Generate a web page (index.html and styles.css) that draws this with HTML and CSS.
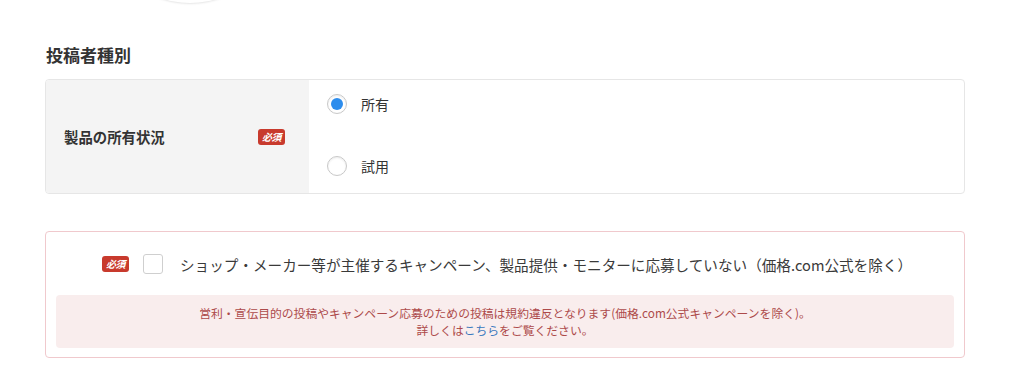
FILE: index.html
```html
<!DOCTYPE html>
<html lang="ja">
  <head>
    <meta charset="utf-8" />
    <meta name="viewport" content="width=device-width, initial-scale=1.0" />
    <link rel="stylesheet" href="styles.css">
  </head>

  <body>
    <div class="page">
      <div class="top-avatar"></div>

      <h2 class="section-title">投稿者種別</h2>

      <div class="form-table">
        <div class="form-head">
          <span class="form-label">製品の所有状況</span>
          <span class="badge-required">必須</span>
        </div>
        <div class="form-body">
          <label class="radio-row">
            <span class="radio radio-checked"></span>
            <span class="radio-text">所有</span>
          </label>
          <label class="radio-row">
            <span class="radio"></span>
            <span class="radio-text">試用</span>
          </label>
        </div>
      </div>

      <div class="agree-box">
        <div class="agree-row">
          <span class="badge-required">必須</span>
          <span class="checkbox"></span>
          <span class="agree-text">ショップ・メーカー等が主催するキャンペーン、製品提供・モニターに応募していない（価格.com公式を除く）</span>
        </div>
        <div class="agree-notice">
          <p>営利・宣伝目的の投稿やキャンペーン応募のための投稿は規約違反となります(価格.com公式キャンペーンを除く)。</p>
          <p>詳しくは<a href="#" class="notice-link">こちら</a>をご覧ください。</p>
        </div>
      </div>
    </div>
  </body>
</html>
```

FILE: styles.css
```css
* {
  box-sizing: border-box;
}

body {
  margin: 0;
  background: #fff;
  color: #333;
  font-family: "Noto Sans CJK JP", "Noto Sans", sans-serif;
}

.page {
  width: 920px;
  margin-left: 45px;
}

/* the round thing cut off at the very top */
.top-avatar {
  width: 180px;
  height: 180px;
  margin: -177px 0 0 55px;
  border-radius: 50%;
  background: #fff;
  box-shadow: 0 1px 2px rgba(0, 0, 0, 0.1);
}

.section-title {
  margin: 40px 0 0 1px;
  height: 36px;
  font-size: 17px;
  line-height: 24px;
  font-weight: bold;
  color: #333;
}

/*table with the label on the left:*/
.form-table {
  display: flex;
  border: 1px solid #e6e6e6;
  border-radius: 4px;
  overflow: hidden;
  height: 115px;
}

.form-head {
  width: 263px;
  background: #f4f4f4;
  display: flex;
  align-items: center;
  justify-content: space-between;
  padding: 0 24px 0 18px;
}

.form-label {
  font-size: 14.4px;
  font-weight: bold;
  color: #333;
}

.badge-required {
  display: inline-flex;
  align-items: center;
  justify-content: center;
  width: 27px;
  height: 16px;
  border-radius: 3px;
  background: #c83a2d;
  color: #fff;
  font-size: 10px;
  font-weight: bold;
  font-style: italic;
  letter-spacing: -0.5px;
  line-height: 1;
}

.form-body {
  flex: 1;
  display: flex;
  flex-direction: column;
  gap: 30px;
  padding: 8px 18px 0;
}

.radio-row {
  display: flex;
  align-items: center;
  height: 32px;
}

.radio {
  width: 20px;
  height: 20px;
  border: 1px solid #c8c8c8;
  border-radius: 50%;
  background: #fff;
  box-shadow: inset 0 1px 2px rgba(0, 0, 0, 0.08);
  display: flex;
  align-items: center;
  justify-content: center;
}

.radio-checked::after {
  content: "";
  width: 12px;
  height: 12px;
  border-radius: 50%;
  background: #2d8ded;
}

.radio-text {
  margin-left: 14px;
  font-size: 14px;
  color: #333;
}

/*agreement box:*/
.agree-box {
  margin-top: 37px;
  border: 1px solid #f0c9cd;
  border-radius: 4px;
  padding: 22px 10px 9px;
}

.agree-row {
  display: flex;
  align-items: center;
  justify-content: center;
  height: 20px;
  padding-left: 4px;
}

.checkbox {
  width: 20px;
  height: 20px;
  margin-left: 14px;
  border: 1px solid #cfcfcf;
  border-radius: 3px;
  background: #fff;
}

.agree-text {
  margin-left: 17px;
  font-size: 14.6px;
  color: #3a3a3a;
  white-space: nowrap;
}

.agree-notice {
  margin-top: 21px;
  background: #f9eded;
  border-radius: 4px;
  padding: 9px 0 10px;
  text-align: center;
  color: #ad4a4a;
  font-size: 11.8px;
  line-height: 17px;
}

.agree-notice p {
  margin: 0;
}

.notice-link {
  color: #3a78bd;
  text-decoration: none;
}
```
